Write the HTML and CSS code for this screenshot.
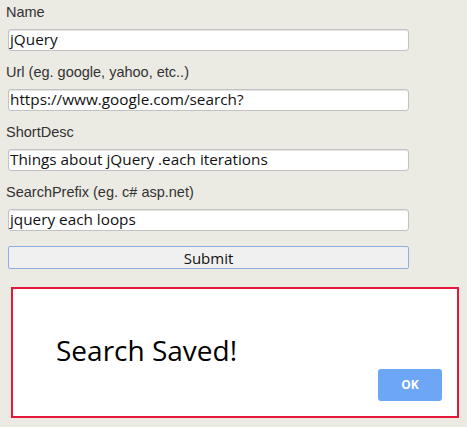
FILE: index.html
```html
<!DOCTYPE html>
<html>
<head>
<meta charset="utf-8">
<link rel="stylesheet" href="styles.css">
</head>
<body>
<form class="form">
  <div class="field">
    <label class="label">Name</label>
    <div class="input">jQuery</div>
  </div>
  <div class="field">
    <label class="label">Url (eg. google, yahoo, etc..)</label>
    <div class="input">https://www.google.com/search?</div>
  </div>
  <div class="field">
    <label class="label">ShortDesc</label>
    <div class="input">Things about jQuery .each iterations</div>
  </div>
  <div class="field">
    <label class="label">SearchPrefix (eg. c# asp.net)</label>
    <div class="input">jquery each loops</div>
  </div>
  <div class="submit">Submit</div>
</form>
<div class="dialog">
  <div class="message">Search Saved!</div>
  <div class="footer"><span class="ok">OK</span></div>
</div>
</body>
</html>
```
FILE: styles.css
```css
html, body {
  margin: 0;
  padding: 0;
  background: #ebeae3;
  width: 467px;
  height: 427px;
  overflow: hidden;
}
.form {
  display: flex;
  flex-direction: column;
  padding: 4px 0 0 8px;
  width: 401px;
}
.field {
  display: flex;
  flex-direction: column;
  gap: 8px;
  margin-bottom: 13px;
}
.label {
  font-family: "Liberation Sans", Arial, sans-serif;
  font-size: 14.5px;
  line-height: 17px;
  color: #333;
  margin-left: -2px;
}
.input {
  box-sizing: border-box;
  height: 22px;
  width: 401px;
  background: #fff;
  border: 1px solid #c2c2c2;
  border-radius: 3px;
  box-shadow: inset 0 1px 1px #e4e4e4;
  font-family: "Open Sans", sans-serif;
  font-size: 15.3px;
  line-height: 19px;
  padding-left: 1px;
  color: #111;
}
.submit {
  box-sizing: border-box;
  margin-top: 2px;
  height: 23px;
  width: 401px;
  background: #f0f0f0;
  border: 1px solid #8eaee3;
  border-radius: 2px;
  font-family: "Open Sans", sans-serif;
  font-size: 15px;
  line-height: 22px;
  text-align: center;
  color: #111;
}
.dialog {
  box-sizing: border-box;
  margin: 18px 0 0 11px;
  width: 448px;
  height: 131px;
  background: #fff;
  border: 2px solid #e5183c;
  display: flex;
  flex-direction: column;
  padding: 0 15px 15px 43px;
}
.message {
  font-family: "Open Sans", sans-serif;
  font-size: 28px;
  line-height: 38px;
  margin-top: 42px;
  color: #000;
}
.footer {
  margin-top: auto;
  display: flex;
  justify-content: flex-end;
}
.ok {
  width: 64px;
  height: 32px;
  background: #6ea6f6;
  border-radius: 3px;
  color: #fff;
  font-family: "Open Sans", sans-serif;
  font-weight: bold;
  font-size: 12px;
  line-height: 32px;
  text-align: center;
}
```
